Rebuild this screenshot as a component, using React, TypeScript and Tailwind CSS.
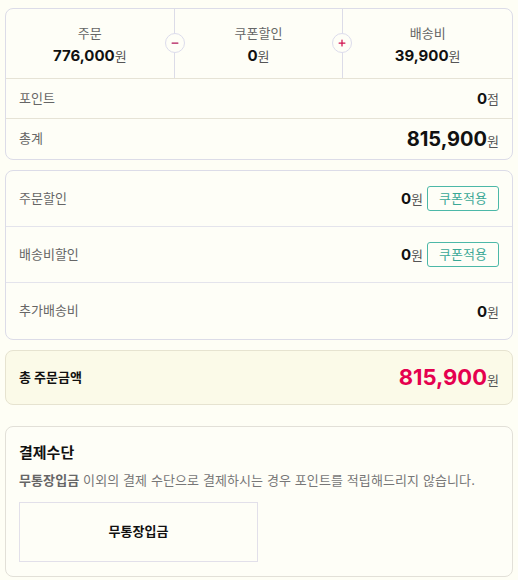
import { Minus, Plus } from "lucide-react"

const font = { fontFamily: '"Inter", "Noto Sans CJK KR", sans-serif' }

const discounts = [
  { label: "주문할인", amount: "0", coupon: true },
  { label: "배송비할인", amount: "0", coupon: true },
  { label: "추가배송비", amount: "0", coupon: false },
]

function Won({ value, big }: { value: string; big?: boolean }) {
  return (
    <span className="text-[#111]">
      <span className={big ? "text-[20px] font-bold" : "text-[15px] font-bold"}>{value}</span>
      <span className="text-[13px] text-[#555]">원</span>
    </span>
  )
}

export default function App() {
  return (
    <div className="min-h-[580px] w-[518px] bg-[#fefef5] px-[5px] pt-[8px] text-[#333]" style={font}>
      {/* 합계 */}
      <div className="rounded-lg border border-[#dcdce8] bg-[#fefef7]">
        <div className="grid h-[70px] grid-cols-3 border-b border-[#e6e3d6]">
          <div className="flex flex-col items-center justify-center pt-[4px] border-r border-[#dcdce8]">
            <span className="text-[13px] text-[#666]">주문</span>
            <Won value="776,000" />
          </div>
          <div className="relative flex flex-col items-center justify-center pt-[4px] border-r border-[#dcdce8]">
            <span className="absolute -left-[10px] top-[24px] flex h-5 w-5 items-center justify-center rounded-full border border-[#dcdcec] bg-[#fefef7]">
              <Minus className="h-[10px] w-[10px] text-[#b0175a]" strokeWidth={3} />
            </span>
            <span className="text-[13px] text-[#666]">쿠폰할인</span>
            <Won value="0" />
            <span className="absolute -right-[10px] top-[24px] flex h-5 w-5 items-center justify-center rounded-full border border-[#dcdcec] bg-[#fefef7]">
              <Plus className="h-[10px] w-[10px] text-[#d0104f]" strokeWidth={3} />
            </span>
          </div>
          <div className="flex flex-col items-center justify-center pt-[4px]">
            <span className="text-[13px] text-[#666]">배송비</span>
            <Won value="39,900" />
          </div>
        </div>
        <div className="flex h-[40px] items-center justify-between border-b border-[#e6e3d6] px-[13px]">
          <span className="text-[13px] text-[#666]">포인트</span>
          <span>
            <span className="text-[15px] font-bold text-[#111]">0</span>
            <span className="text-[13px] text-[#555]">점</span>
          </span>
        </div>
        <div className="flex h-[40px] items-center justify-between px-[13px]">
          <span className="text-[13px] text-[#666]">총계</span>
          <Won value="815,900" big />
        </div>
      </div>

      {/* 할인 */}
      <div className="mt-[10px] rounded-lg border border-[#dcdce8] bg-[#fefef7]">
        {discounts.map((d, i) => (
          <div
            key={d.label}
            className={`flex h-[56px] items-center justify-between px-[13px] ${i < discounts.length - 1 ? "border-b border-[#e4e4ec]" : ""}`}
          >
            <span className="text-[13px] text-[#666]">{d.label}</span>
            <div className="flex items-center gap-[4px]">
              <Won value={d.amount} />
              {d.coupon && (
                <button className="h-[25px] w-[72px] rounded-[3px] border border-[#4cb8a8] text-[13px] text-[#3aa896]">
                  쿠폰적용
                </button>
              )}
            </div>
          </div>
        ))}
      </div>

      {/* 총 주문금액 */}
      <div className="mt-[10px] flex h-[55px] items-center justify-between rounded-lg border border-[#e6e3d0] bg-[#fbfae8] px-[13px]">
        <span className="text-[13px] font-bold text-[#111]">총 주문금액</span>
        <span>
          <span className="text-[22px] font-bold text-[#e5004f]">815,900</span>
          <span className="text-[13px] text-[#555]">원</span>
        </span>
      </div>

      {/* 결제수단 */}
      <div className="mt-[21px] rounded-lg border border-[#e2e0d8] bg-[#fefef7] px-[13px] pb-[14px] pt-[15px]">
        <h3 className="text-[15px] font-bold text-[#111]">결제수단</h3>
        <p className="mt-[6px] text-[13px] tracking-[0.1px] text-[#777]">
          <b className="font-bold text-[#666]">무통장입금</b> 이외의 결제 수단으로 결제하시는 경우 포인트를 적립해드리지 않습니다.
        </p>
        <div className="mt-[12px] flex h-[60px] w-[239px] items-center justify-center border border-[#e2e0ea]">
          <span className="text-[13px] font-bold text-[#111]">무통장입금</span>
        </div>
      </div>
    </div>
  )
}
